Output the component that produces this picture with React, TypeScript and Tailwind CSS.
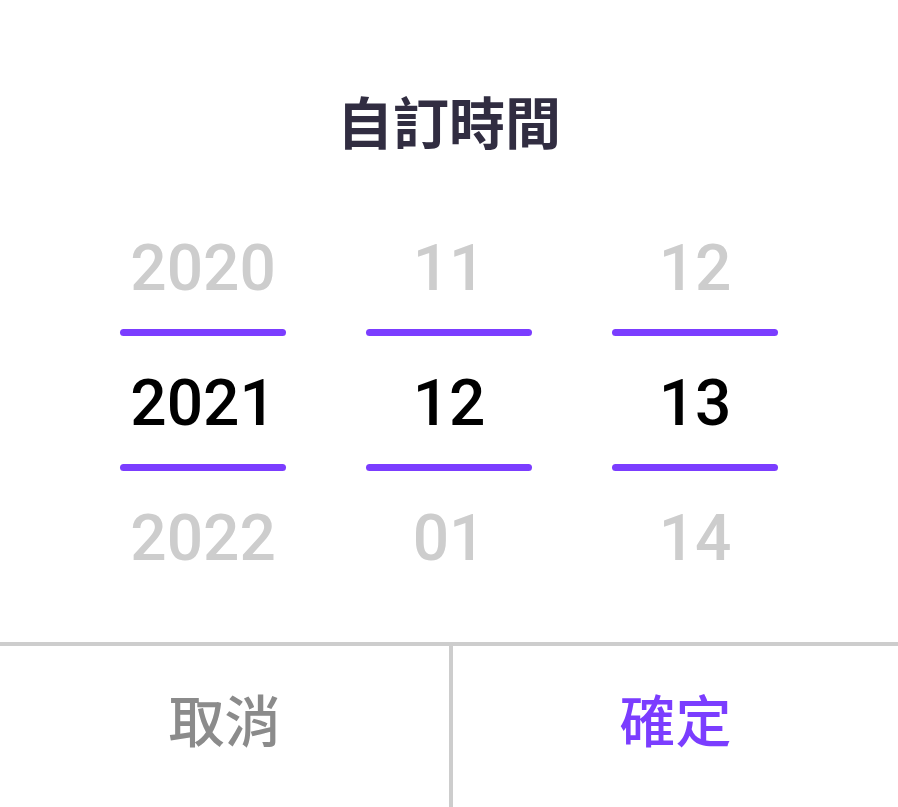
const columns = [
  { name: '年', values: ['2020', '2021', '2022'] },
  { name: '月', values: ['11', '12', '01'] },
  { name: '日', values: ['12', '13', '14'] },
];

function Wheel({ name, values }: { name: string; values: string[] }) {
  return (
    <div role="group" aria-label={name} className="flex flex-1 flex-col text-center text-[64px] leading-[120px] font-medium">
      <button type="button" className="h-32 pt-2 text-[#cdcdcd]">{values[0]}</button>
      <div className="h-[7px] rounded-full bg-[#7b3dff]" />
      <div aria-current="true" className="h-32 pt-2 text-black">{values[1]}</div>
      <div className="h-[7px] rounded-full bg-[#7b3dff]" />
      <button type="button" className="h-32 pt-2 text-[#cdcdcd]">{values[2]}</button>
    </div>
  );
}

export default function App() {
  return (
    <main className="flex min-h-screen flex-col bg-white font-['Roboto','Noto_Sans_CJK_TC',sans-serif]">
      <h1 className="pt-[85px] text-center text-[56px] leading-[80px] font-bold text-[#312d41]">自訂時間</h1>
      <section className="flex flex-1 gap-20 px-[120px] pt-9">
        {columns.map((column) => (
          <Wheel key={column.name} name={column.name} values={column.values} />
        ))}
      </section>
      <footer className="grid h-[165px] grid-cols-2 border-t-4 border-[#cdcdcd] text-[56px] leading-[80px] font-medium">
        <button type="button" className="pb-2 text-[#8b8b8b]">取消</button>
        <button type="button" className="border-l-4 border-[#cdcdcd] pb-2 text-[#7b3dff]">確定</button>
      </footer>
    </main>
  );
}
